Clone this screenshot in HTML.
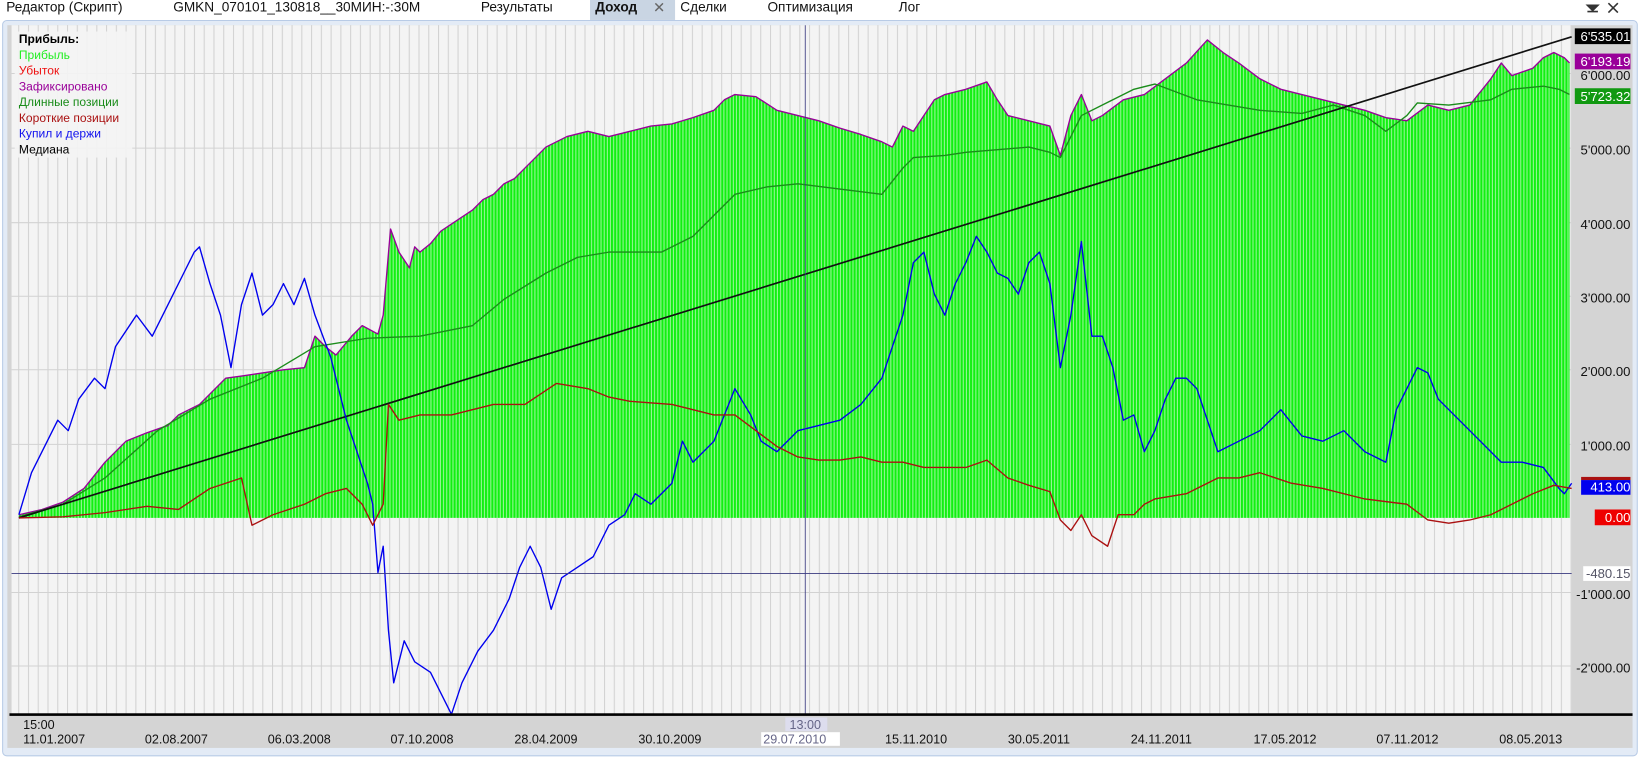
<!DOCTYPE html>
<html><head><meta charset="utf-8"><style>
html,body{margin:0;padding:0;background:#fff;overflow:hidden}
svg{display:block}
text{font-family:"Liberation Sans","DejaVu Sans",sans-serif}
</style></head><body>
<svg width="1642" height="770" viewBox="0 0 1564 733" preserveAspectRatio="none" xmlns="http://www.w3.org/2000/svg">
<defs>
<pattern id="vg" x="8" y="0" width="9.3" height="10" patternUnits="userSpaceOnUse">
<rect width="9.3" height="10" fill="#f4f4f4"/><rect x="0" width="1" height="10" fill="#d2d2d2"/>
</pattern>
<pattern id="gf" x="0" y="0" width="3" height="10" patternUnits="userSpaceOnUse">
<rect width="3" height="10" fill="#11f011"/><rect x="2" width="1" height="10" fill="#99f799"/>
</pattern>
</defs>
<rect x="562" y="0" width="81" height="19" fill="#c9d5e3"/>
<g font-size="13" fill="#111">
<text x="6" y="11">Редактор (Скрипт)</text>
<text x="165" y="11">GMKN_070101_130818__30МИН:-:30M</text>
<text x="458" y="11">Результаты</text>
<text x="567" y="11" font-weight="bold">Доход</text>
<text x="622" y="12" fill="#666" font-size="14">✕</text>
<text x="648" y="11">Сделки</text>
<text x="731" y="11">Оптимизация</text>
<text x="856" y="11">Лог</text>
</g>
<path d="M1512 5h10l-5 5z M1512 11h10" stroke="#333" stroke-width="1.5" fill="#333"/>
<path d="M1532 3l9 9M1541 3l-9 9" stroke="#333" stroke-width="1.5"/>
<rect x="2.5" y="19.5" width="1557" height="700" rx="4" fill="#e3ebf6" stroke="#b8cbe6"/>
<rect x="7" y="24" width="1548" height="688" fill="#d4d4d4"/>
<rect x="11" y="24" width="1486" height="657" fill="url(#vg)"/>
<g stroke="#d2d2d2" stroke-width="1">
<path d="M11 70H1497M11 141H1497M11 212H1497M11 282H1497M11 352H1497M11 423H1497M11 564H1497M11 634H1497"/>
</g>
<polygon fill="url(#gf)" points="18,493 18,490 40,485 60,478 80,465 100,440 120,420 140,412 160,405 170,395 190,385 200,375 215,360 230,358 250,355 270,352 290,350 300,320 310,330 320,338 335,320 345,310 360,318 365,300 372,218 380,240 390,255 395,235 400,240 410,232 420,220 435,210 450,200 460,190 470,185 480,175 490,170 500,160 510,150 520,140 540,130 560,125 580,130 600,125 620,120 640,118 660,112 680,105 690,95 700,90 720,92 740,105 760,110 780,115 800,122 820,128 840,135 850,140 860,120 870,125 880,110 890,95 900,90 920,85 940,78 950,95 960,110 980,115 1000,120 1010,148 1020,110 1030,90 1040,115 1050,110 1070,95 1090,90 1110,75 1130,60 1150,38 1165,50 1180,60 1200,75 1220,85 1240,90 1260,95 1280,100 1300,105 1320,112 1340,115 1360,100 1380,105 1400,100 1420,75 1430,60 1440,72 1460,65 1470,55 1480,50 1490,55 1495,60 1495,493"/>
<g fill="none" stroke-width="1.3" stroke-linejoin="round">
<polyline stroke="#990099" points="18,490 40,485 60,478 80,465 100,440 120,420 140,412 160,405 170,395 190,385 200,375 215,360 230,358 250,355 270,352 290,350 300,320 310,330 320,338 335,320 345,310 360,318 365,300 372,218 380,240 390,255 395,235 400,240 410,232 420,220 435,210 450,200 460,190 470,185 480,175 490,170 500,160 510,150 520,140 540,130 560,125 580,130 600,125 620,120 640,118 660,112 680,105 690,95 700,90 720,92 740,105 760,110 780,115 800,122 820,128 840,135 850,140 860,120 870,125 880,110 890,95 900,90 920,85 940,78 950,95 960,110 980,115 1000,120 1010,148 1020,110 1030,90 1040,115 1050,110 1070,95 1090,90 1110,75 1130,60 1150,38 1165,50 1180,60 1200,75 1220,85 1240,90 1260,95 1280,100 1300,105 1320,112 1340,115 1360,100 1380,105 1400,100 1420,75 1430,60 1440,72 1460,65 1470,55 1480,50 1490,55 1495,60"/>
<polyline stroke="#1a8c1a" points="18,492 60,480 100,455 150,410 200,380 250,360 300,330 350,322 400,320 450,310 480,285 520,260 550,245 580,240 630,240 660,225 700,185 730,178 760,175 800,180 840,185 860,160 870,150 900,148 920,145 980,140 1000,145 1010,150 1030,110 1050,100 1080,85 1100,80 1140,95 1170,100 1200,105 1240,108 1270,100 1300,110 1320,125 1340,110 1350,98 1380,100 1420,95 1440,85 1470,82 1485,85 1495,90"/>
<polyline stroke="#111" stroke-width="1.6" points="18,493 1497,35"/>
<polyline stroke="#0000ee" points="18,490 30,450 40,430 55,400 65,410 75,380 90,360 100,370 110,330 130,300 145,320 160,290 175,260 185,240 190,235 200,270 210,300 220,350 230,290 240,260 250,300 260,290 270,270 280,290 290,265 300,300 315,340 330,400 340,430 350,460 355,480 360,545 365,520 370,600 375,650 385,610 395,630 410,640 420,660 430,680 440,650 455,620 470,600 485,570 495,540 505,520 515,540 525,580 535,550 550,540 565,530 580,500 595,490 605,470 620,480 640,460 650,420 660,440 680,420 700,370 715,395 725,420 740,430 760,410 780,405 800,400 820,385 840,360 850,330 860,300 870,250 880,240 890,280 900,300 910,270 920,250 930,225 940,240 950,260 960,265 970,280 980,250 990,240 1000,270 1010,350 1020,300 1030,230 1040,320 1050,320 1060,350 1070,400 1080,395 1090,430 1100,410 1110,380 1120,360 1130,360 1140,370 1150,400 1160,430 1180,420 1200,410 1220,390 1240,415 1260,420 1280,410 1300,430 1320,440 1330,390 1340,370 1350,350 1360,355 1370,380 1390,400 1410,420 1430,440 1450,440 1470,445 1485,465 1490,470 1497,460"/>
<polyline stroke="#aa1111" points="18,493 60,492 100,488 140,482 170,485 200,465 215,460 230,455 240,500 260,490 290,480 310,470 330,465 345,480 355,500 365,480 370,385 380,400 400,395 430,395 470,385 500,385 530,365 560,370 580,378 600,382 640,385 660,390 680,395 700,395 720,410 740,425 760,435 780,438 800,438 820,435 840,440 860,440 880,445 900,445 920,445 940,438 960,455 980,462 1000,468 1010,495 1020,505 1030,490 1040,510 1055,520 1065,490 1080,490 1090,480 1100,475 1130,470 1160,455 1180,455 1200,450 1230,460 1260,465 1300,475 1340,480 1360,495 1380,498 1400,495 1420,490 1440,480 1460,470 1480,462 1497,465"/>
</g>
<path d="M767 24V681M11 546H1497" stroke="#3a3a80" stroke-width="0.8"/>
<rect x="9" y="679" width="1546" height="2.5" fill="#000"/>
<rect x="14" y="30" width="112" height="120" fill="#f4f4f4" opacity="0.9"/>
<g font-size="11.5">
<text x="18" y="41" font-weight="bold" fill="#000">Прибыль:</text>
<text x="18" y="56" fill="#22ee22">Прибыль</text>
<text x="18" y="71" fill="#ee1111">Убыток</text>
<text x="18" y="86" fill="#990099">Зафиксировано</text>
<text x="18" y="101" fill="#1a8c1a">Длинные позиции</text>
<text x="18" y="116" fill="#aa1111">Короткие позиции</text>
<text x="18" y="131" fill="#1111ee">Купил и держи</text>
<text x="18" y="146" fill="#000">Медиана</text>
</g>
<g font-size="12.5" text-anchor="end" fill="#111">
<text x="1553" y="76">6'000.00</text>
<text x="1553" y="147">5'000.00</text>
<text x="1553" y="218">4'000.00</text>
<text x="1553" y="288">3'000.00</text>
<text x="1553" y="358">2'000.00</text>
<text x="1553" y="429">1'000.00</text>
<text x="1553" y="570">-1'000.00</text>
<text x="1553" y="640">-2'000.00</text>
</g>
<rect x="1500" y="27" width="53" height="15" fill="#000"/>
<rect x="1500" y="51" width="53" height="15" fill="#990099"/>
<rect x="1500" y="84" width="53" height="15" fill="#119911"/>
<rect x="1506" y="454" width="47" height="3" fill="#aa1111"/>
<rect x="1506" y="457" width="47" height="14" fill="#0000ee"/>
<rect x="1519" y="485" width="34" height="15" fill="#ee0000"/>
<rect x="1508" y="539" width="45" height="14" fill="#fff"/>
<g font-size="12.5" text-anchor="end" fill="#fff">
<text x="1553" y="39">6'535.01</text>
<text x="1553" y="63">6'193.19</text>
<text x="1553" y="96">5'723.32</text>
<text x="1553" y="468">413.00</text>
<text x="1553" y="497">0.00</text>
<text x="1553" y="550" fill="#556">-480.15</text>
</g>
<rect x="748" y="683" width="40" height="13" fill="#dde"/>
<rect x="725" y="697" width="75" height="13" fill="#fff"/>
<g font-size="12" fill="#111">
<text x="22" y="694">15:00</text>
<text x="22" y="708">11.01.2007</text>
<text x="138" y="708">02.08.2007</text>
<text x="255" y="708">06.03.2008</text>
<text x="372" y="708">07.10.2008</text>
<text x="490" y="708">28.04.2009</text>
<text x="608" y="708">30.10.2009</text>
<text x="752" y="694" fill="#668">13:00</text>
<text x="727" y="708" fill="#668">29.07.2010</text>
<text x="843" y="708">15.11.2010</text>
<text x="960" y="708">30.05.2011</text>
<text x="1077" y="708">24.11.2011</text>
<text x="1194" y="708">17.05.2012</text>
<text x="1311" y="708">07.11.2012</text>
<text x="1428" y="708">08.05.2013</text>
</g>
</svg>
</body></html>
